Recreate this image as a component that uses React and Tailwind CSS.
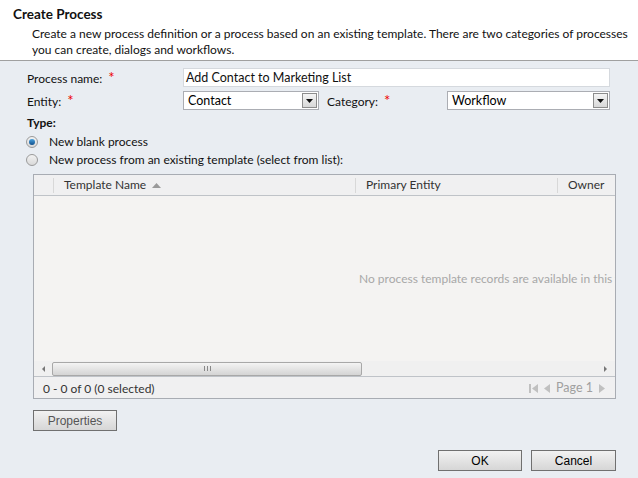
import React from 'react';

const font = { fontFamily: 'Lato, "Open Sans", sans-serif' };

const Req = () => <span className="text-[#e00] ml-[6px] text-[15px] leading-none relative top-[-1px]">*</span>;

const SelectBox = ({ value, className }) => (
    <div className={`h-[19px] bg-white border border-[#abadb3] flex items-center ${className}`}>
        <span className="flex-1 pl-[4px] pt-[1px] text-[12.5px] text-black">{value}</span>
        <div className="w-[15px] h-[15px] mr-[1px] border border-[#8c8c8c] bg-gradient-to-b from-[#f4f4f4] to-[#d8d8d8] flex items-center justify-center">
            <svg width="7" height="4" viewBox="0 0 7 4"><path d="M0 0h7L3.5 4z" fill="#111" /></svg>
        </div>
    </div>
);

const Radio = ({ checked }) => (
    <div className="w-[12px] h-[12px] rounded-full border border-[#9a9a9a] bg-gradient-to-b from-[#f2f2f2] to-[#d9d9d9] flex items-center justify-center">
        {checked && <div className="w-[6px] h-[6px] rounded-full bg-gradient-to-b from-[#4aa3df] to-[#11508c]" />}
    </div>
);

const Btn = ({ children, className, gray }) => (
    <button
        className={`h-[21px] border border-[#707070] bg-gradient-to-b from-[#f2f2f2] to-[#d6d6d6] text-[12px] ${gray ? 'text-[#555]' : 'text-black'} ${className}`}
        style={{ fontFamily: '"Liberation Sans", Arial, sans-serif' }}
    >
        {children}
    </button>
);

export default function App() {
    return (
        <div className="w-[638px] h-[478px] bg-[#e9edf2] flex flex-col text-[#111] text-[12px]" style={font}>
            <div className="bg-white border-b border-[#a0a0a0] h-[61px] pl-[13px] pt-[5px]">
                <div className="font-bold text-[13.5px] leading-[18px]">Create Process</div>
                <div className="pl-[19px] pt-[3px] leading-[16px] whitespace-nowrap">
                    Create a new process definition or a process based on an existing template. There are two categories of processes
                    <br />
                    you can create, dialogs and workflows.
                </div>
            </div>

            <div className="pl-[27px] pt-[7px] flex flex-col">
                <div className="flex items-center h-[19px]">
                    <div className="w-[156px] pt-[2px] flex items-center">Process name:<Req /></div>
                    <div className="w-[427px] h-[19px] bg-white border border-[#d5d9de] pl-[2px] pt-[1px] text-[12.5px] flex items-center">Add Contact to Marketing List</div>
                </div>
                <div className="flex items-center h-[19px] mt-[4px]">
                    <div className="w-[156px] pt-[2px] flex items-center">Entity:<Req /></div>
                    <SelectBox value="Contact" className="w-[136px]" />
                    <div className="w-[128px] pl-[8px] pt-[2px] flex items-center">Category:<Req /></div>
                    <SelectBox value="Workflow" className="w-[163px]" />
                </div>
                <div className="font-bold mt-[5px] leading-[16px]">Type:</div>
                <div className="flex items-center mt-[2px] h-[18px]">
                    <div className="ml-[-1px] w-[23px]"><Radio checked /></div>
                    <span>New blank process</span>
                </div>
                <div className="flex items-center h-[18px]">
                    <div className="ml-[-1px] w-[23px]"><Radio /></div>
                    <span>New process from an existing template (select from list):</span>
                </div>
            </div>

            <div className="ml-[33px] mt-[5px] w-[583px] h-[225px] border border-[#a8acb3] bg-[#f4f3f2] flex flex-col overflow-hidden">
                <div className="h-[21px] bg-[#f0f0f1] border-b border-[#bfc3c8] flex items-center text-[#333]">
                    <div className="w-[20px] h-[15px] border-r border-[#d8d8d8]" />
                    <div className="w-[302px] h-[15px] border-r border-[#d8d8d8] pl-[10px] flex items-center">
                        Template Name
                        <svg className="ml-[6px]" width="9" height="5" viewBox="0 0 9 5"><path d="M0 5h9L4.5 0z" fill="#9a9a9a" /></svg>
                    </div>
                    <div className="w-[202px] h-[15px] border-r border-[#d8d8d8] pl-[10px] flex items-center">Primary Entity</div>
                    <div className="pl-[10px] flex items-center">Owner</div>
                </div>
                <div className="flex-1 flex items-center pl-[325px] text-[#a8a8a8] whitespace-nowrap">
                    No process template records are available in this view.
                </div>
                <div className="h-[16px] flex items-center bg-[#f0f0f0] border-b border-[#bfc3c8]">
                    <div className="w-[18px] flex justify-center">
                        <svg width="3" height="6" viewBox="0 0 3 6"><path d="M3 0v6L0 3z" fill="#777" /></svg>
                    </div>
                    <div className="w-[310px] h-[14px] border border-[#a8a8a8] rounded-[2px] bg-gradient-to-b from-[#f4f4f4] to-[#d4d4d4] flex items-center justify-center">
                        <svg width="7" height="5" viewBox="0 0 7 5"><path d="M0.5 0v5M3.5 0v5M6.5 0v5" stroke="#888" /></svg>
                    </div>
                    <div className="flex-1" />
                    <div className="w-[20px] flex justify-center">
                        <svg width="3" height="6" viewBox="0 0 3 6"><path d="M0 0v6L3 3z" fill="#777" /></svg>
                    </div>
                </div>
                <div className="h-[21px] bg-[#f0f0f1] flex items-center pl-[9px] pr-[10px] pt-[2px]">
                    <span className="flex-1 text-[#333]">0 - 0 of 0 (0 selected)</span>
                    <div className="flex items-center gap-[6px] text-[#a0a0a0]">
                        <svg width="9" height="9" viewBox="0 0 9 9"><path d="M0 0h2v9H0zM9 0v9L3 4.5z" fill="#c0c0c0" /></svg>
                        <svg width="6" height="9" viewBox="0 0 6 9"><path d="M6 0v9L0 4.5z" fill="#c0c0c0" /></svg>
                        <span className="text-[12.5px]">Page 1</span>
                        <svg width="6" height="9" viewBox="0 0 6 9"><path d="M0 0v9L6 4.5z" fill="#c0c0c0" /></svg>
                    </div>
                </div>
            </div>

            <div className="ml-[33px] mt-[11px]">
                <Btn gray className="w-[84px]">Properties</Btn>
            </div>

            <div className="flex justify-end gap-[9px] pr-[22px] mt-[19px]">
                <Btn className="w-[84px]">OK</Btn>
                <Btn className="w-[85px]">Cancel</Btn>
            </div>
        </div>
    );
}
